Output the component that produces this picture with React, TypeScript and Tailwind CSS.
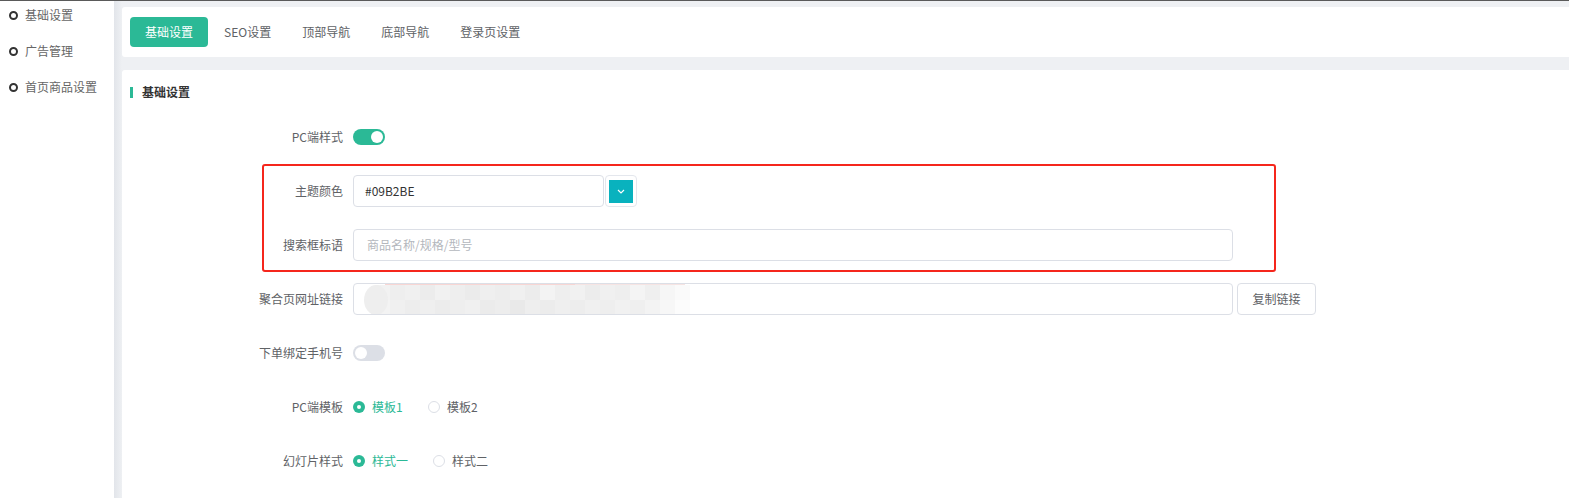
import React from 'react'

const font = { fontFamily: '"Noto Sans CJK SC", "Noto Sans", sans-serif' }

const menu = ['基础设置', '广告管理', '首页商品设置']
const tabs = ['基础设置', 'SEO设置', '顶部导航', '底部导航', '登录页设置']

// mosaic tones for the blurred link
const top = [242, 238, 240, 236, 241, 238, 235, 239, 237, 240, 236, 243, 238, 241, 236, 240, 238, 244, 239, 246, 250]
const bottom = [243, 240, 237, 239, 236, 238, 240, 235, 237, 233, 238, 236, 239, 237, 240, 238, 241, 239, 243, 247, 252]

function Toggle({ on }: { on: boolean }) {
  return (
    <div className={`w-[32px] h-[16px] rounded-full relative ${on ? 'bg-[#2bb996]' : 'bg-[#dcdfe6]'}`}>
      <div className={`absolute top-[2px] w-[12px] h-[12px] rounded-full bg-white ${on ? 'left-[18px]' : 'left-[2px]'}`} />
    </div>
  )
}

function Radio({ checked, label, gap }: { checked: boolean; label: string; gap: string }) {
  return (
    <div className={`flex items-center ${gap}`}>
      {checked ? (
        <div className="w-[12px] h-[12px] rounded-full bg-[#2bb996] flex items-center justify-center">
          <div className="w-[4px] h-[4px] rounded-full bg-white" />
        </div>
      ) : (
        <div className="w-[12px] h-[12px] rounded-full border border-[#dcdfe6] bg-white" />
      )}
      <span className={`ml-[7px] text-[12px] ${checked ? 'text-[#2bb996]' : 'text-[#606266]'}`}>{label}</span>
    </div>
  )
}

function Row({ label, children }: { label: string; children: React.ReactNode }) {
  return (
    <div className="flex items-center h-[32px]">
      <div className="w-[231px] pr-[10px] text-right text-[12px] text-[#606266]">{label}</div>
      <div className="flex items-center flex-1">{children}</div>
    </div>
  )
}

export default function App() {
  return (
    <div style={font} className="flex w-[1569px] h-[498px] overflow-hidden bg-[#eef0f3] border-t border-[#5a5a5a]">
      <div className="w-[114px] bg-white flex flex-col">
        <div className="flex flex-col -mt-[4px]">
          {menu.map((m) => (
            <div key={m} className="flex items-center h-[36px] pl-[9px]">
              <div className="w-[9px] h-[9px] rounded-full border-2 border-[#333]" />
              <span className="ml-[7px] text-[12px] text-[#666]">{m}</span>
            </div>
          ))}
        </div>
      </div>
      <div className="w-[8px] bg-gradient-to-r from-[#e2e5ea] to-[#eef0f3]" />
      <div className="flex-1 flex flex-col pt-[6px]">
        <div className="h-[50px] bg-white rounded-l-[3px] flex items-center pl-[8px] gap-[1px]">
          {tabs.map((t, i) => (
            <div
              key={t}
              className={`h-[30px] px-[15px] flex items-center text-[12px] rounded-[4px] ${
                i === 0 ? 'bg-[#2bb996] text-white' : 'text-[#606266]'
              }`}
            >
              {t}
            </div>
          ))}
        </div>
        <div className="mt-[13px] flex-1 bg-white rounded-tl-[3px] pt-[15px]">
          <div className="flex items-center pl-[8px] h-[14px]">
            <div className="w-[3px] h-[11px] bg-[#2bb996]" />
            <span className="ml-[9px] text-[12px] font-bold text-[#333]">基础设置</span>
          </div>
          <div className="relative mt-[22px] flex flex-col gap-[22px]">
            <Row label="PC端样式">
              <Toggle on />
            </Row>
            <Row label="主题颜色">
              <div className="w-[251px] h-[32px] border border-[#dcdfe6] rounded-[4px] flex items-center pl-[11px] text-[12px] text-[#333]">
                #09B2BE
              </div>
              <div className="ml-[1px] w-[32px] h-[32px] border border-[#e4e7ed] rounded-[4px] flex items-center justify-center">
                <div className="w-[24px] h-[23px] bg-[#09b2be] flex items-center justify-center">
                  <svg width="8" height="5" viewBox="0 0 8 5">
                    <path d="M1 1l3 3 3-3" stroke="#fff" strokeWidth="1.2" fill="none" />
                  </svg>
                </div>
              </div>
            </Row>
            <Row label="搜索框标语">
              <div className="w-[880px] h-[32px] border border-[#dcdfe6] rounded-[4px] flex items-center pl-[13px] text-[12px] text-[#b4b7bd]">
                商品名称/规格/型号
              </div>
            </Row>
            <Row label="聚合页网址链接">
              <div className="w-[880px] h-[32px] border border-[#dcdfe6] rounded-[4px] relative overflow-hidden">
                <svg width="330" height="32" className="absolute left-[9px] top-0">
                  <rect x="22" y="0" width="190" height="2" fill="#f8d6d4" />
                  <rect x="212" y="0" width="110" height="2" fill="#f6e4e3" />
                  {top.map((v, i) => (
                    <rect key={'t' + i} x={12 + i * 15} y="1" width="15" height="15" fill={`rgb(${v},${v},${v})`} />
                  ))}
                  {bottom.map((v, i) => (
                    <rect key={'b' + i} x={12 + i * 15} y="16" width="15" height="15" fill={`rgb(${v},${v},${v})`} />
                  ))}
                  <ellipse cx="13" cy="16" rx="12" ry="15" fill="#eeeeee" />
                </svg>
              </div>
              <div className="ml-[4px] w-[79px] h-[32px] border border-[#dcdfe6] rounded-[4px] flex items-center justify-center text-[12px] text-[#606266]">
                复制链接
              </div>
            </Row>
            <Row label="下单绑定手机号">
              <Toggle on={false} />
            </Row>
            <Row label="PC端模板">
              <Radio checked label="模板1" gap="w-[75px]" />
              <Radio checked={false} label="模板2" gap="" />
            </Row>
            <Row label="幻灯片样式">
              <Radio checked label="样式一" gap="w-[80px]" />
              <Radio checked={false} label="样式二" gap="" />
            </Row>
            <div className="absolute left-[140px] top-[43px] w-[1014px] h-[108px] border-2 border-[#f5261c] rounded-[3px] pointer-events-none" />
          </div>
        </div>
      </div>
    </div>
  )
}
